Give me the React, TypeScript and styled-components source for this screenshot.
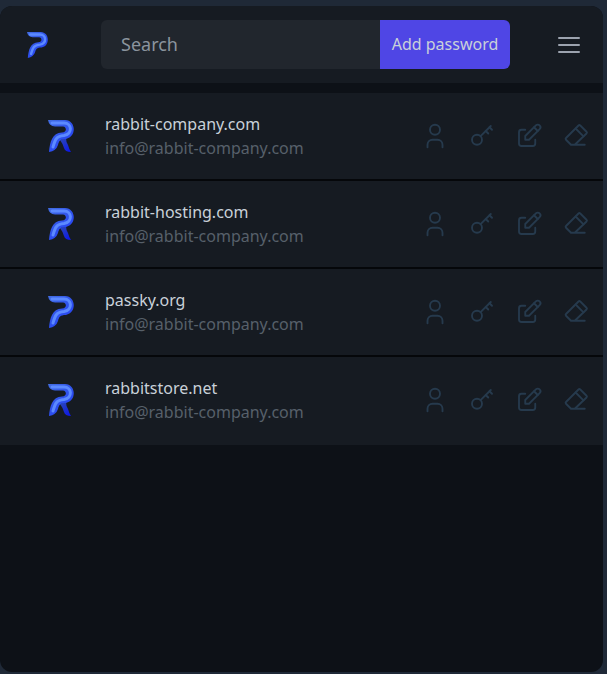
import React from "react";
import styled, { createGlobalStyle } from "styled-components";

const GlobalStyle = createGlobalStyle`
  *, *::before, *::after { box-sizing: border-box; }
  body {
    margin: 0;
    background: #1f2937;
    font-family: "Noto Sans", sans-serif;
    font-size: 16px;
    line-height: 24px;
  }
  button, input { font: inherit; }
`;

const Page = styled.div`
  display: flex;
  min-height: 100vh;
  padding: 6px 4px 2px 0;
`;

const Panel = styled.div`
  display: flex;
  flex: 1;
  flex-direction: column;
  min-width: 0;
  overflow: hidden;
  border-radius: 12px;
  background: #0d1117;
`;

const Header = styled.header`
  display: flex;
  align-items: center;
  padding: 14px 22px 14px 27px;
  background: #161b22;
`;

const Home = styled.a`
  display: flex;
  margin-right: 53px;
`;

const SearchForm = styled.form`
  display: flex;
  flex: 1;
  min-width: 0;
  height: 49px;
  margin-right: 47px;
`;

const SearchInput = styled.input`
  flex: 1;
  min-width: 0;
  padding: 0 20px 2px;
  border: 0;
  border-radius: 6px 0 0 6px;
  outline: none;
  background: #21262d;
  color: #c9d1d9;
  font-size: 18px;
  &::placeholder { color: #8b949e; opacity: 1; }
`;

const AddButton = styled.button`
  width: 130px;
  padding: 0 0 2px;
  border: 0;
  border-radius: 0 6px 6px 0;
  background: #4f46e5;
  color: #c9d1d9;
  white-space: nowrap;
  cursor: pointer;
`;

const IconButton = styled.button<{ $color: string }>`
  display: flex;
  padding: 0;
  border: 0;
  background: none;
  color: ${(p) => p.$color};
  cursor: pointer;
`;

const List = styled.ul`
  display: flex;
  flex-direction: column;
  margin: 10px 0 0;
  padding: 0;
  list-style: none;
`;

const Row = styled.li`
  display: flex;
  align-items: center;
  height: 88px;
  padding: 0 12px 0 48px;
  border-bottom: 2px solid #05070a;
  background: #161b22;
  &:last-child { border-bottom-color: #161b22; }
`;

const Details = styled.div`
  flex: 1;
  min-width: 0;
  margin-left: 31px;
`;

const Site = styled.div`
  color: #c9d1d9;
`;

const Account = styled.div`
  color: #57606a;
`;

const Actions = styled.div`
  display: flex;
  gap: 17px;
`;

type LogoProps = { width: number; height: number; letter: "P" | "R" };

function Logo({ width, height, letter }: LogoProps) {
  return (
    <svg width={width} height={height} viewBox="0 0 26 32" fill="none" strokeLinecap="round" strokeLinejoin="round" aria-hidden="true">
      <defs>
        <linearGradient id="logo-edge" x1="0" y1="0" x2="24" y2="24" gradientUnits="userSpaceOnUse">
          <stop offset="0" stopColor="#426de0" />
          <stop offset="1" stopColor="#2340f5" />
        </linearGradient>
        <linearGradient id="logo-leg" x1="13" y1="19" x2="21" y2="32" gradientUnits="userSpaceOnUse">
          <stop offset="0" stopColor="#2a46b8" />
          <stop offset="1" stopColor="#0c17e8" />
        </linearGradient>
      </defs>
      {letter === "R" && <path d="M12 20L18 18Q18 22 20 25Q21 29 23 32Q17 32 16 28Q15 24 12 20Z" fill="url(#logo-leg)" />}
      <path d="M0 0H17C28 0 29 17 18 19C12 19 11 21 10 25Q8 31 1 32C2 22 4 13 14 12.5C19 12.5 19 7 15 6.5H7Q1 6 0 0Z" fill="url(#logo-edge)" />
      <path d="M4 3H16C24 3 25 14 16 15.500C8 16 7 20 5 27" stroke="#5c8aff" strokeWidth="3" />
    </svg>
  );
}

const actionIcons = [
  { label: "Copy username", paths: ["M8 7a4 4 0 1 0 8 0a4 4 0 0 0-8 0", "M6 21v-2a4 4 0 0 1 4-4h4a4 4 0 0 1 4 4v2"] },
  { label: "Copy password", paths: ["M4 15a4 4 0 1 0 8 0a4 4 0 0 0-8 0", "M10.85 12.15L19 4", "M18 5l2 2", "M15 8l2 2"] },
  { label: "Edit", paths: ["M9 7H6a2 2 0 0 0-2 2v9a2 2 0 0 0 2 2h9a2 2 0 0 0 2-2v-3", "M9 15h3l8.5-8.5a1.5 1.5 0 0 0-3-3L9 12v3", "M16 5l3 3"] },
  { label: "Delete", paths: ["M19 19H8l-4-4a1 1 0 0 1 0-1.41l10-10a1 1 0 0 1 1.41 0l5 5a1 1 0 0 1 0 1.41L11 19", "M18 12.3L11.7 6"] },
];

const accounts: { site: string; user: string; letter: "P" | "R" }[] = [
  { site: "rabbit-company.com", user: "info@rabbit-company.com", letter: "R" },
  { site: "rabbit-hosting.com", user: "info@rabbit-company.com", letter: "R" },
  { site: "passky.org", user: "info@rabbit-company.com", letter: "P" },
  { site: "rabbitstore.net", user: "info@rabbit-company.com", letter: "R" },
];

export default function App() {
  return (
    <>
      <GlobalStyle />
      <Page>
        <Panel>
          <Header>
            <Home href="#" aria-label="Home"><Logo width={21} height={26} letter="P" /></Home>
            <SearchForm onSubmit={(e) => e.preventDefault()}>
              <SearchInput type="text" aria-label="Search" placeholder="Search" />
              <AddButton type="button">Add password</AddButton>
            </SearchForm>
            <IconButton type="button" $color="#9ca3af" aria-label="Open menu">
              <svg width="24" height="24" viewBox="0 0 24 24" stroke="currentColor" strokeWidth="2" strokeLinecap="round">
                <path d="M2 5H22M2 12H22M2 19H22" />
              </svg>
            </IconButton>
          </Header>
          <List>
            {accounts.map((a) => (
              <Row key={a.site}>
                <Logo width={26} height={32} letter={a.letter} />
                <Details>
                  <Site>{a.site}</Site>
                  <Account>{a.user}</Account>
                </Details>
                <Actions>
                  {actionIcons.map((icon) => (
                    <IconButton key={icon.label} type="button" $color="#263a4d" aria-label={icon.label}>
                      <svg width="30" height="30" viewBox="0 0 24 24" fill="none" stroke="currentColor" strokeWidth="1.5" strokeLinecap="round" strokeLinejoin="round">
                        {icon.paths.map((d) => <path key={d} d={d} />)}
                      </svg>
                    </IconButton>
                  ))}
                </Actions>
              </Row>
            ))}
          </List>
        </Panel>
      </Page>
    </>
  );
}
